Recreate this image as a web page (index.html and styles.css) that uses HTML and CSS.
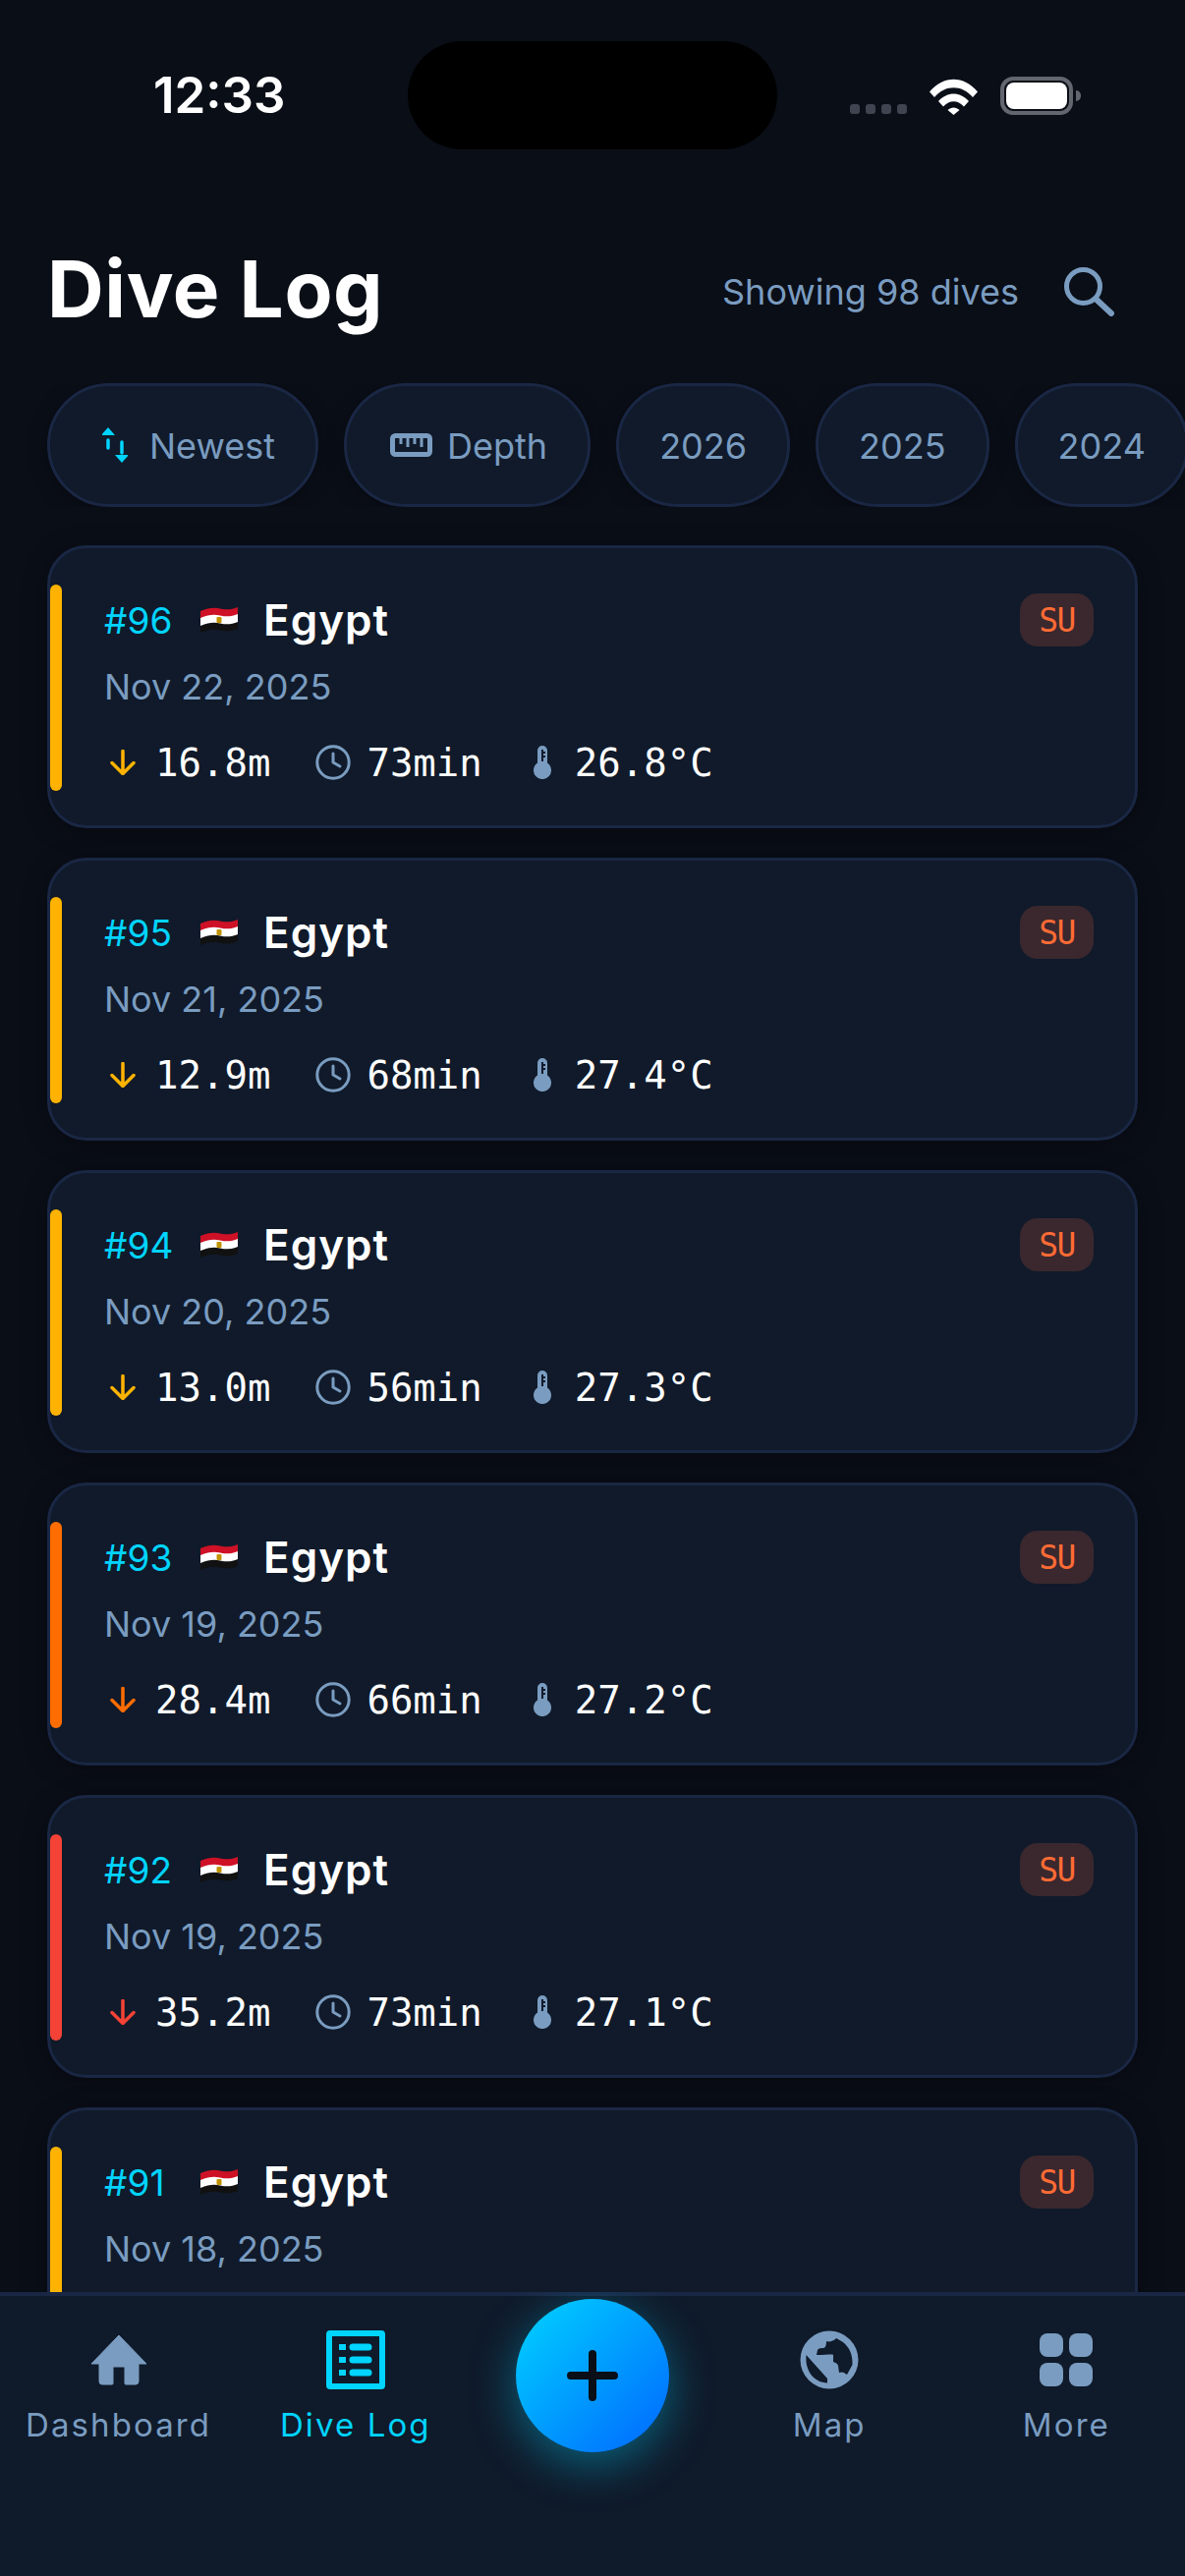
FILE: index.html
```html
<!DOCTYPE html>
<html lang="en">
<head>
    <meta charset="UTF-8">
    <meta name="viewport" content="width=device-width, initial-scale=1.0">
    <title>Dive Log</title>
    <link rel="stylesheet" href="styles.css">
</head>
<body>

<svg class="icon-defs" width="0" height="0">
    <symbol id="flag" viewBox="0 0 40 30">
        <path d="M1 6C9 3 14 2 21 3.500C28 5 33 4.500 39 2V11C33 13.500 28 14 21 12.500C14 11 9 12 1 15Z" fill="#ce1126"/>
        <path d="M1 13C9 10 14 9 21 10.500C28 12 33 11.500 39 9V19C33 21.500 28 22 21 20.500C14 19 9 20 1 23Z" fill="#fff"/>
        <path d="M1 21C9 18 14 17 21 18.500C28 20 33 19.500 39 17V24C33 26.500 28 27 21 25.500C14 24 9 25 1 28Z" fill="#111"/>
        <rect x="17.500" y="12" width="5" height="6" rx="1" fill="#c09300"/>
    </symbol>
    <symbol id="arrow" viewBox="0 0 26 26">
        <path d="M13 1.500V24M2 13.500L13 24.500L24 13.500" fill="none" stroke="currentColor" stroke-width="3.500" stroke-linecap="round" stroke-linejoin="round"/>
    </symbol>
    <symbol id="clock" viewBox="0 0 36 36">
        <circle cx="18" cy="18" r="16.200" fill="none" stroke="currentColor" stroke-width="3"/>
        <path d="M18 9V18L25 22" fill="none" stroke="currentColor" stroke-width="3" stroke-linecap="round" stroke-linejoin="round"/>
    </symbol>
    <symbol id="thermo" viewBox="0 0 18 34">
        <path d="M4 5a5 5 0 0 1 10 0V17.600a9 9 0 1 1-10 0Z" fill="currentColor"/>
        <path d="M8 4H10V16H8ZM10 6H12V8H10ZM10 10H12V12H10Z" fill="#101a2a"/>
    </symbol>
</svg>

<div class="status-bar">
    <span class="status-time">12:33</span>
    <div class="status-icons">
        <div class="signal">
            <span></span><span></span><span></span><span></span>
        </div>
        <svg class="wifi" viewBox="0 0 51 38">
            <path d="M1 14.500C15 -2.500 36 -2.500 50 14.500L45 20C34 7 17 7 6 20Z" fill="#fff"/>
            <path d="M10 24C19 14 32 14 41 24L36 29.500C29.500 22.500 21.500 22.500 15 29.500Z" fill="#fff"/>
            <path d="M19.500 33C23 29.500 28 29.500 31.500 33L25.500 38Z" fill="#fff"/>
        </svg>
        <div class="battery">
            <div class="battery-body"><div class="battery-fill"></div></div>
            <div class="battery-nib"></div>
        </div>
    </div>
    <div class="island"></div>
</div>

<header class="page-header">
    <h1>Dive Log</h1>
    <div class="header-right">
        <span class="dive-count">Showing 98 dives</span>
        <svg class="search-icon" viewBox="0 0 51 50">
            <circle cx="19.500" cy="19.500" r="17" fill="none" stroke="currentColor" stroke-width="5"/>
            <path d="M33 33L48 47" fill="none" stroke="currentColor" stroke-width="6" stroke-linecap="round"/>
        </svg>
    </div>
</header>

<div class="chips">
    <div class="chip">
        <svg class="chip-sort" viewBox="0 0 26 36">
            <path d="M6 13V21M20 15V26" stroke="#00d4ff" stroke-width="3.500" stroke-linecap="round" fill="none"/>
            <path d="M6 0L13 8H-1ZM20 36L13 28H27Z" fill="#00d4ff"/>
        </svg>
        Newest
    </div>
    <div class="chip chip-depth">
        <svg class="chip-ruler" viewBox="0 0 43 24">
            <rect x="2.500" y="2.500" width="38" height="19" rx="3" fill="none" stroke="currentColor" stroke-width="5"/>
            <path d="M11 3V11M18 3V14M25 3V11M32 3V14" stroke="currentColor" stroke-width="3" fill="none"/>
        </svg>
        Depth
    </div>
    <div class="chip">2026</div>
    <div class="chip">2025</div>
    <div class="chip">2024</div>
</div>

<main class="dive-list">
    <article class="dive-card">
        <div class="depth-bar amber"></div>
        <div class="card-top">
            <span class="dive-no">#96</span>
            <svg class="flag"><use href="#flag"/></svg>
            <span class="country">Egypt</span>
            <span class="badge">SU</span>
        </div>
        <div class="dive-date">Nov 22, 2025</div>
        <div class="stats">
            <svg class="stat-arrow amber-text"><use href="#arrow"/></svg>
            <span class="stat-val">16.8m</span>
            <svg class="stat-clock"><use href="#clock"/></svg>
            <span class="stat-val">73min</span>
            <svg class="stat-thermo"><use href="#thermo"/></svg>
            <span class="stat-val">26.8°C</span>
        </div>
    </article>

    <article class="dive-card">
        <div class="depth-bar amber"></div>
        <div class="card-top">
            <span class="dive-no">#95</span>
            <svg class="flag"><use href="#flag"/></svg>
            <span class="country">Egypt</span>
            <span class="badge">SU</span>
        </div>
        <div class="dive-date">Nov 21, 2025</div>
        <div class="stats">
            <svg class="stat-arrow amber-text"><use href="#arrow"/></svg>
            <span class="stat-val">12.9m</span>
            <svg class="stat-clock"><use href="#clock"/></svg>
            <span class="stat-val">68min</span>
            <svg class="stat-thermo"><use href="#thermo"/></svg>
            <span class="stat-val">27.4°C</span>
        </div>
    </article>

    <article class="dive-card">
        <div class="depth-bar amber"></div>
        <div class="card-top">
            <span class="dive-no">#94</span>
            <svg class="flag"><use href="#flag"/></svg>
            <span class="country">Egypt</span>
            <span class="badge">SU</span>
        </div>
        <div class="dive-date">Nov 20, 2025</div>
        <div class="stats">
            <svg class="stat-arrow amber-text"><use href="#arrow"/></svg>
            <span class="stat-val">13.0m</span>
            <svg class="stat-clock"><use href="#clock"/></svg>
            <span class="stat-val">56min</span>
            <svg class="stat-thermo"><use href="#thermo"/></svg>
            <span class="stat-val">27.3°C</span>
        </div>
    </article>

    <article class="dive-card">
        <div class="depth-bar orange"></div>
        <div class="card-top">
            <span class="dive-no">#93</span>
            <svg class="flag"><use href="#flag"/></svg>
            <span class="country">Egypt</span>
            <span class="badge">SU</span>
        </div>
        <div class="dive-date">Nov 19, 2025</div>
        <div class="stats">
            <svg class="stat-arrow orange-text"><use href="#arrow"/></svg>
            <span class="stat-val">28.4m</span>
            <svg class="stat-clock"><use href="#clock"/></svg>
            <span class="stat-val">66min</span>
            <svg class="stat-thermo"><use href="#thermo"/></svg>
            <span class="stat-val">27.2°C</span>
        </div>
    </article>

    <article class="dive-card">
        <div class="depth-bar red"></div>
        <div class="card-top">
            <span class="dive-no">#92</span>
            <svg class="flag"><use href="#flag"/></svg>
            <span class="country">Egypt</span>
            <span class="badge">SU</span>
        </div>
        <div class="dive-date">Nov 19, 2025</div>
        <div class="stats">
            <svg class="stat-arrow red-text"><use href="#arrow"/></svg>
            <span class="stat-val">35.2m</span>
            <svg class="stat-clock"><use href="#clock"/></svg>
            <span class="stat-val">73min</span>
            <svg class="stat-thermo"><use href="#thermo"/></svg>
            <span class="stat-val">27.1°C</span>
        </div>
    </article>

    <article class="dive-card">
        <div class="depth-bar amber"></div>
        <div class="card-top">
            <span class="dive-no">#91</span>
            <svg class="flag"><use href="#flag"/></svg>
            <span class="country">Egypt</span>
            <span class="badge">SU</span>
        </div>
        <div class="dive-date">Nov 18, 2025</div>
    </article>
</main>

<nav class="tab-bar">
    <div class="tab">
        <svg class="tab-icon" viewBox="0 0 60 60">
            <path d="M30 5L58 34H50V52a3 3 0 0 1-3 3H37a1 1 0 0 1-1-1V37H24V54a1 1 0 0 1-1 1H13a3 3 0 0 1-3-3V34H2Z" fill="currentColor" stroke="currentColor" stroke-width="1" stroke-linejoin="round"/>
        </svg>
        <span>Dashboard</span>
    </div>
    <div class="tab active">
        <svg class="tab-icon" viewBox="0 0 60 60">
            <rect x="3" y="3" width="54" height="54" rx="1" fill="none" stroke="currentColor" stroke-width="6"/>
            <path d="M13 14H20V20H13ZM13 27H20V33H13ZM13 40H20V46H13Z" fill="currentColor"/>
            <path d="M27 17H43M27 30H43M27 43H43" fill="none" stroke="currentColor" stroke-width="7" stroke-linecap="round"/>
        </svg>
        <span>Dive Log</span>
    </div>
    <div class="tab">
        <button class="fab">
            <svg viewBox="0 0 52 52" width="52" height="52">
                <path d="M4 26H48M26 4V48" fill="none" stroke="#0a0e17" stroke-width="8" stroke-linecap="round"/>
            </svg>
        </button>
    </div>
    <div class="tab">
        <svg class="tab-icon" viewBox="0 0 60 60">
            <path fill-rule="evenodd" fill="currentColor" d="M30 0.500a29.500 29.500 0 1 0 0 59a29.500 29.500 0 0 0 0-59ZM37 8C39 9 41 10 44 12C50 17 54 24 53.500 35L48 45C44 42 43 42 40 43L39 36C38 33 36 33 34 32V25C33 24 28 25 17 25L18 20C19 18 22 18 24 18C26 18 27 15 27 11C29 12 35 11 37 8ZM6.500 25L28 49V53.500C15 53 5 42 6.500 25Z"/>
        </svg>
        <span>Map</span>
    </div>
    <div class="tab">
        <div class="more-grid">
            <i></i><i></i><i></i><i></i>
        </div>
        <span>More</span>
    </div>
</nav>

</body>
</html>
```

FILE: styles.css
```css
* {
    box-sizing: border-box;
}

html, body {
    margin: 0;
    height: 100%;
}

body {
    width: 1206px;
    height: 2622px;
    overflow: hidden;
    display: flex;
    flex-direction: column;
    background-color: #0a0e17;
    color: #7a9cc0;
    font-family: Inter, "Noto Sans", sans-serif;
}

.icon-defs {
    position: absolute;
}

/* Statusbalk */
.status-bar {
    position: relative;
    height: 154px;
    padding: 0 106px 0 156px;
    display: flex;
    justify-content: space-between;
    align-items: flex-start;
    flex: none;
}

.status-time {
    margin-top: 66px;
    color: #fff;
    font-size: 51px;
    line-height: 62px;
    font-weight: 600;
}

.status-icons {
    margin-top: 78px;
    display: flex;
    align-items: flex-end;
    gap: 22px;
}

.signal {
    display: flex;
    gap: 6px;
    margin-bottom: 1px;
}

.signal span {
    width: 10px;
    height: 10px;
    border-radius: 3px;
    background-color: #3f4450;
}

.wifi {
    width: 51px;
    height: 38px;
}

.battery {
    display: flex;
    align-items: center;
    gap: 3px;
}

.battery-body {
    width: 74px;
    height: 39px;
    padding: 2px;
    border: 4px solid #63666e;
    border-radius: 13px;
}

.battery-fill {
    width: 100%;
    height: 100%;
    background-color: #fff;
    border-radius: 8px;
}

.battery-nib {
    width: 5px;
    height: 11px;
    border-radius: 0 5px 5px 0;
    background-color: #63666e;
}

.island {
    position: absolute;
    left: 415px;
    top: 42px;
    width: 376px;
    height: 110px;
    border-radius: 55px;
    background-color: #000;
}

/* Kop */
.page-header {
    height: 236px;
    padding: 0 72px 0 48px;
    display: flex;
    justify-content: space-between;
    align-items: flex-start;
    flex: none;
}

.page-header h1 {
    margin: 0;
    padding-top: 92px;
    color: #fff;
    font-size: 80px;
    line-height: 96px;
    font-weight: 700;
    letter-spacing: 0.600px;
}

.header-right {
    display: flex;
    align-items: center;
    gap: 46px;
    padding-top: 113px;
}

.dive-count {
    font-size: 36px;
    line-height: 60px;
}

.search-icon {
    width: 51px;
    height: 50px;
}

/* Filters */
.chips {
    display: flex;
    gap: 26px;
    padding-left: 48px;
    height: 126px;
    flex: none;
    overflow: hidden;
}

.chip {
    flex: none;
    height: 126px;
    padding: 2px 41px 0;
    display: flex;
    align-items: center;
    border: 3px solid #1a2744;
    border-radius: 63px;
    background-color: #101a2a;
    font-size: 36px;
    box-shadow: 0 4px 20px rgba(0, 0, 0, 0.3);
}

.chip-sort {
    width: 26px;
    height: 36px;
    margin: -2px 22px 0 12px;
}

.chip-ruler {
    width: 43px;
    height: 24px;
    margin: -2px 15px 0 3px;
}

/* Duiklijst */
.dive-list {
    flex: 1;
    min-height: 0;
    overflow: hidden;
    padding: 39px 48px 0;
    display: flex;
    flex-direction: column;
    gap: 30px;
}

.dive-card {
    position: relative;
    flex: none;
    height: 288px;
    padding: 40px 42px 0 55px;
    border: 3px solid #1a2744;
    border-radius: 40px;
    background-color: #101a2a;
    box-shadow: 0 4px 24px rgba(0, 0, 0, 0.35);
}

.depth-bar {
    position: absolute;
    left: 0;
    top: 37px;
    width: 12px;
    height: 210px;
    border-radius: 6px;
}

.amber { background-color: #ffb300; }
.orange { background-color: #ff6d00; }
.red { background-color: #f44336; }
.amber-text { color: #ffb300; }
.orange-text { color: #ff6d00; }
.red-text { color: #f44336; }

.card-top {
    display: flex;
    align-items: center;
    height: 66px;
}

.dive-no {
    color: #00d4ff;
    font-size: 37px;
    width: 97px;
}

.flag {
    width: 40px;
    height: 30px;
    margin-right: 25px;
}

.country {
    color: #fff;
    font-size: 44px;
    font-weight: 600;
    letter-spacing: 1px;
}

.badge {
    margin-left: auto;
    width: 75px;
    height: 54px;
    display: flex;
    align-items: center;
    justify-content: center;
    border-radius: 18px;
    background-color: #3a282e;
    color: #ff6b35;
    font-family: "DejaVu Sans Mono", monospace;
    font-size: 33px;
    letter-spacing: -1.500px;
}

.dive-date {
    margin-top: 13px;
    font-size: 36px;
    line-height: 44px;
}

.stats {
    margin-top: 33px;
    display: flex;
    align-items: center;
    height: 44px;
}

.stat-val {
    color: #fff;
    font-family: "DejaVu Sans Mono", monospace;
    font-size: 39px;
}

.stat-arrow {
    width: 26px;
    height: 26px;
    margin: 0 20px 0 6px;
}

.stat-clock {
    width: 36px;
    height: 36px;
    margin: 0 16px 0 46px;
    color: #7a9cc0;
}

.stat-thermo {
    width: 18px;
    height: 34px;
    margin: 0 24px 0 52px;
    color: #7a9cc0;
}

/* Tabbalk */
.tab-bar {
    flex: none;
    height: 289px;
    display: flex;
    align-items: flex-start;
    border-top: 4px solid #1a2744;
    background-color: #0f1a2a;
}

.tab {
    flex: 1;
    display: flex;
    flex-direction: column;
    align-items: center;
    font-size: 33px;
    line-height: 40px;
    letter-spacing: 2.100px;
    padding-top: 35px;
}

.tab.active {
    color: #00d4ff;
}

.tab-icon {
    width: 60px;
    height: 60px;
    margin-bottom: 16px;
}

.more-grid {
    width: 54px;
    height: 54px;
    margin: 3px 0 19px;
    display: grid;
    grid-template-columns: 1fr 1fr;
    gap: 6px;
}

.more-grid i {
    background-color: currentColor;
    border-radius: 8px;
}

.fab {
    width: 156px;
    height: 156px;
    margin-top: -32px;
    display: flex;
    align-items: center;
    justify-content: center;
    padding: 0;
    border: none;
    border-radius: 50%;
    background: linear-gradient(135deg, #00d4ff, #0066ff);
    box-shadow: 0 12px 48px rgba(0, 212, 255, 0.4);
}
```
